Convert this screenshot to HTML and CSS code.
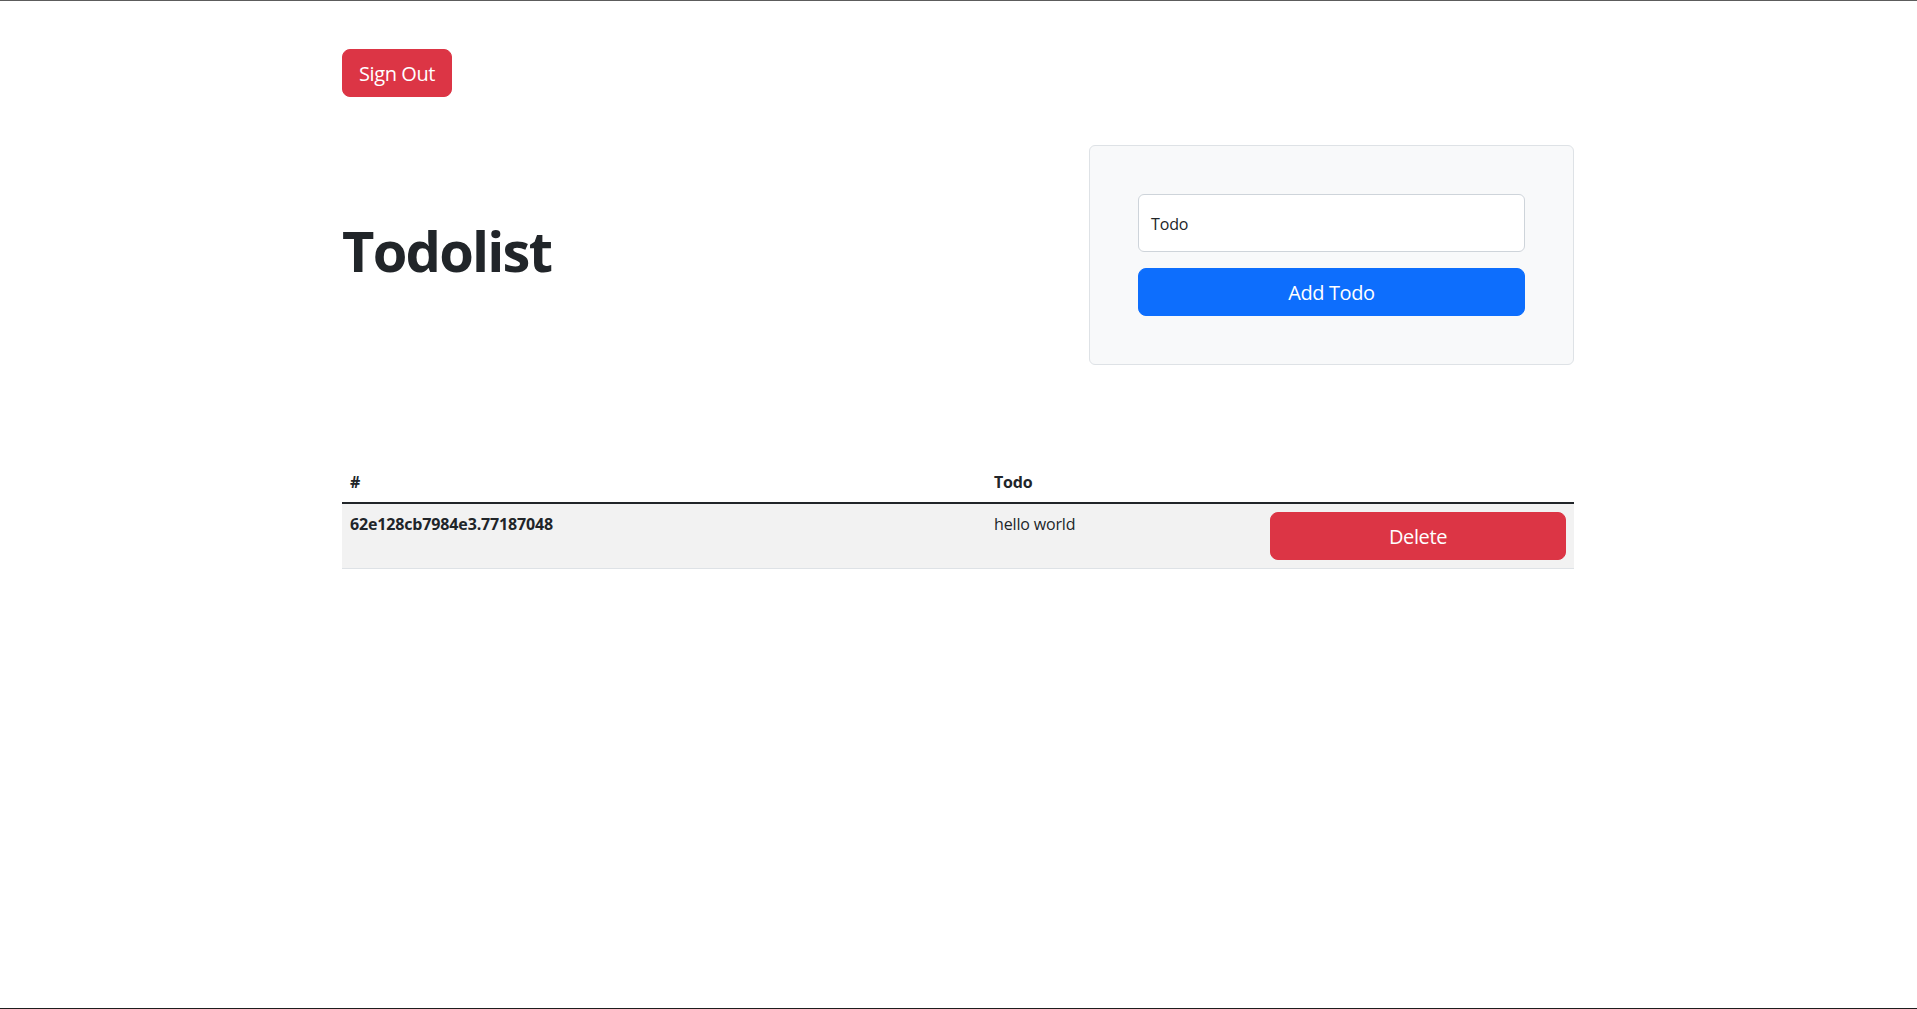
FILE: index.html
```html
<!DOCTYPE html>
<html lang="en">
<head>
<meta charset="utf-8">
<title>Todolist</title>
<link rel="stylesheet" href="styles.css">
</head>
<body>
<div class="page">
  <div class="container">
    <button class="btn btn-danger btn-lg">Sign Out</button>
    <div class="top-row">
      <h1 class="title">Todolist</h1>
      <div class="card">
        <div class="input">Todo</div>
        <button class="btn btn-primary btn-lg btn-block">Add Todo</button>
      </div>
    </div>
    <table class="table">
      <colgroup>
        <col class="c1"><col class="c2"><col class="c3">
      </colgroup>
      <thead>
        <tr><th>#</th><th>Todo</th><th></th></tr>
      </thead>
      <tbody>
        <tr>
          <th>62e128cb7984e3.77187048</th>
          <td>hello world</td>
          <td><button class="btn btn-danger btn-lg btn-block">Delete</button></td>
        </tr>
      </tbody>
    </table>
  </div>
</div>
</body>
</html>
```

FILE: styles.css
```css
* { box-sizing: border-box; }
html, body { margin: 0; padding: 0; }
body {
  font-family: "Open Sans", "Noto Sans", sans-serif;
  font-size: 16px;
  line-height: 1.5;
  color: #212529;
  background: #fff;
  letter-spacing: -0.15px;
}
.page {
  height: 1009px;
  border-top: 1px solid #5c5c5c;
  border-bottom: 1px solid #1e1e1e;
  overflow: hidden;
}
.container {
  width: 1232px;
  margin: 48px 0 0 342px;
}
.btn {
  display: inline-block;
  font-family: inherit;
  border: 1px solid transparent;
  color: #fff;
  cursor: pointer;
  text-align: center;
  letter-spacing: -0.4px;
}
.btn-lg {
  font-size: 20px;
  line-height: 30px;
  padding: 9px 16px 7px;
  border-radius: 8px;
}
.btn-danger { background: #dc3545; border-color: #dc3545; }
.btn-primary { background: #0d6efd; border-color: #0d6efd; }
.btn-block { display: block; width: 100%; }
.top-row {
  display: flex;
  justify-content: space-between;
  align-items: center;
  margin-top: 48px;
}
.title {
  font-size: 56px;
  font-weight: 700;
  line-height: 1.2;
  margin: 0 0 8px 0;
  letter-spacing: -1.8px;
}
.card {
  width: 485px;
  background: #f8f9fa;
  border: 1px solid #dee2e6;
  border-radius: 6px;
  padding: 48px;
}
.input {
  height: 58px;
  background: #fff;
  border: 1px solid #ced4da;
  border-radius: 6px;
  padding: 1px 12px 0;
  display: flex;
  align-items: center;
  font-size: 16px;
  margin-bottom: 16px;
}
.table {
  width: 100%;
  border-collapse: collapse;
  table-layout: fixed;
  margin-top: 97px;
}
.c1 { width: 644px; }
.c2 { width: 276px; }
.c3 { width: 312px; }
.table th, .table td {
  padding: 8px;
  text-align: left;
  vertical-align: top;
  border-bottom: 1px solid #dee2e6;
}
.table th { font-weight: 700; }
.table thead th {
  vertical-align: bottom;
  border-bottom: 2px solid #212529;
}
.table tbody tr { background: #f2f2f2; }
```
